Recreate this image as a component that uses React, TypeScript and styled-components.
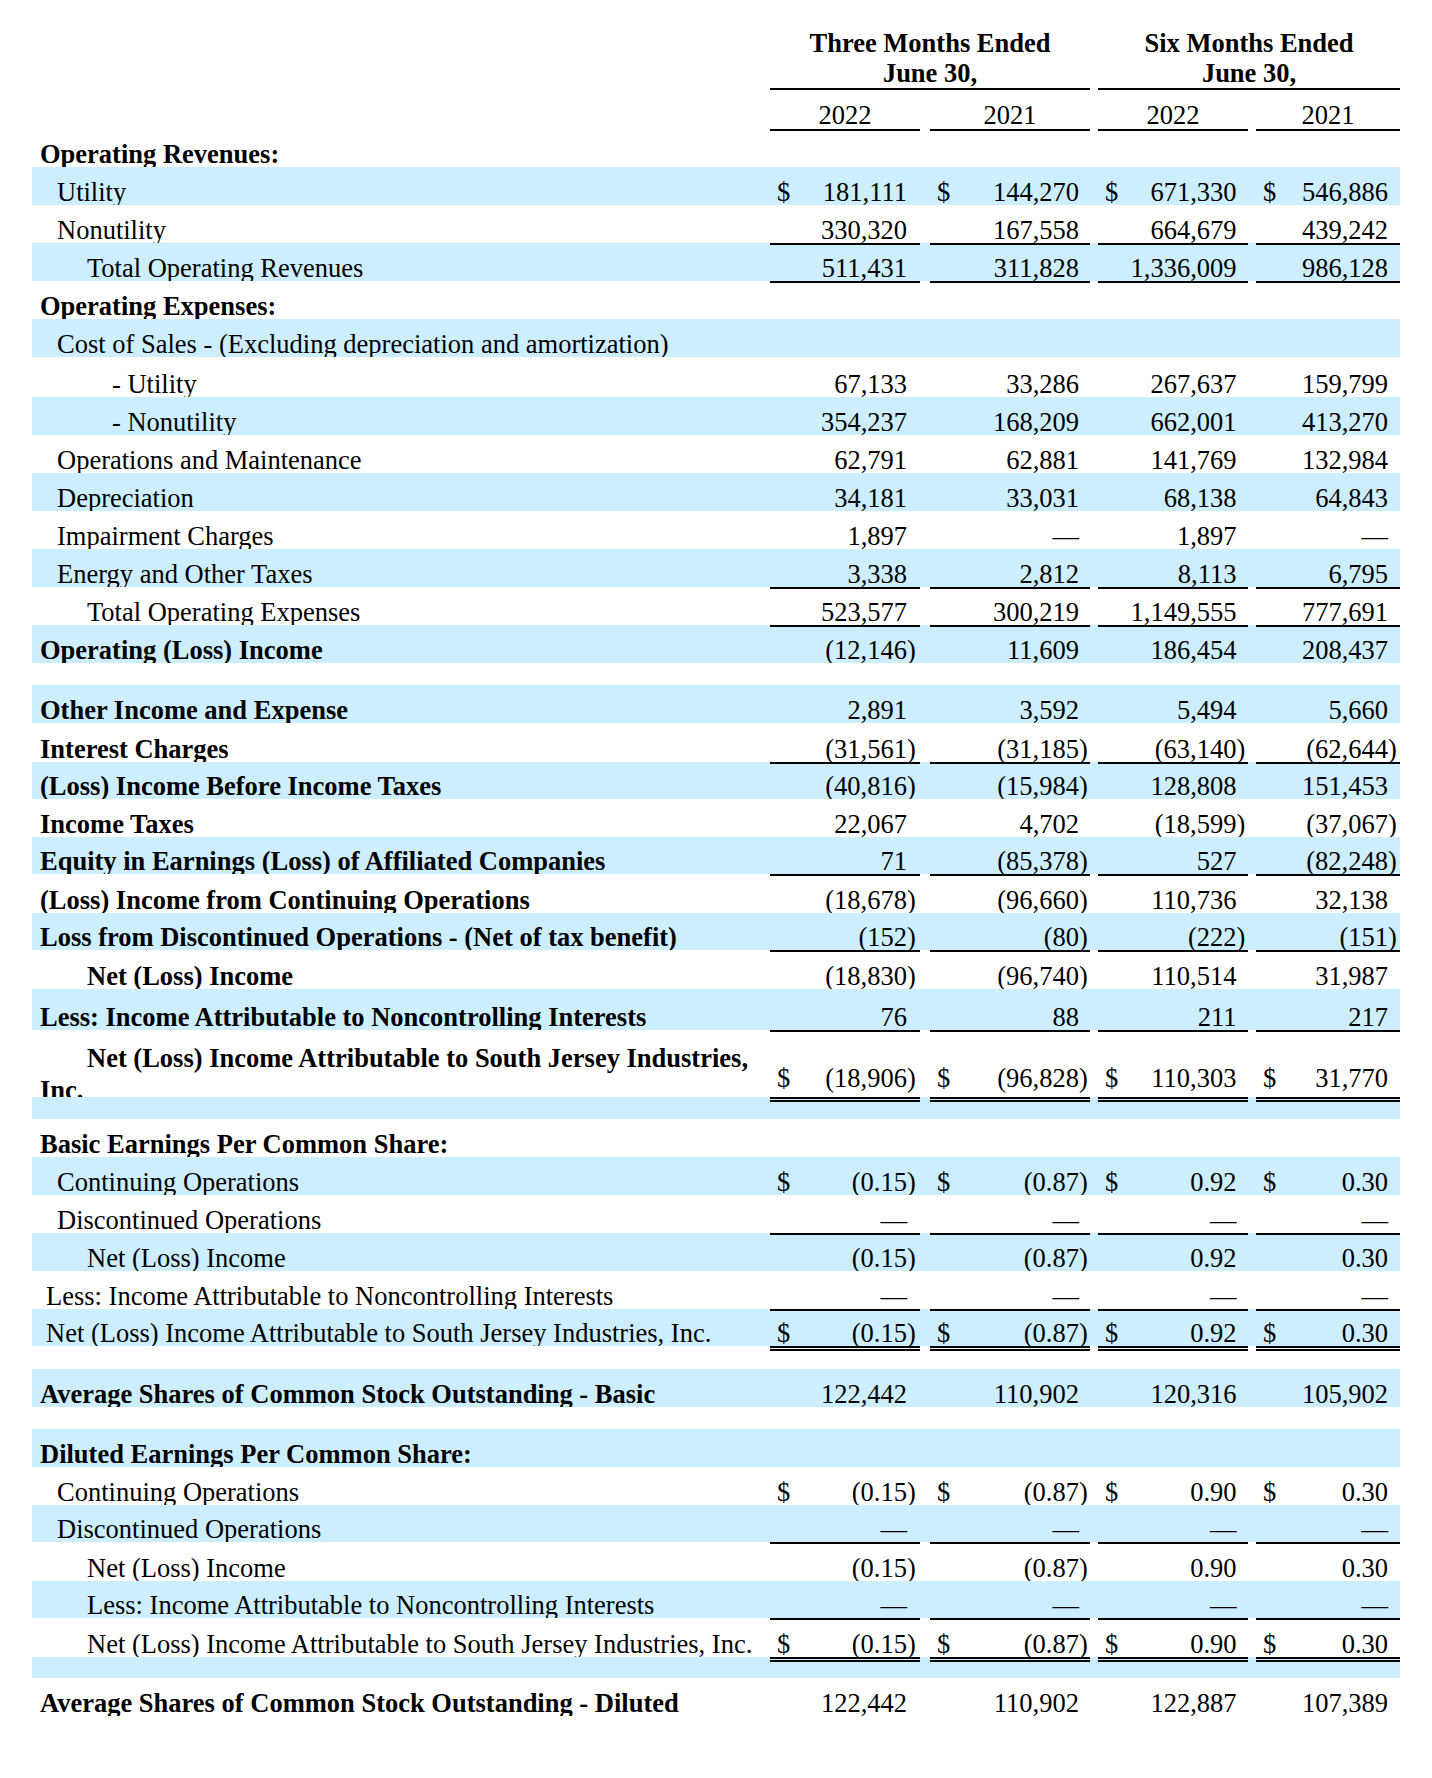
import React from 'react';
import styled, { createGlobalStyle } from 'styled-components';

const GlobalStyle = createGlobalStyle`
  html, body { margin: 0; padding: 0; background: #ffffff; }
  body { font-family: "Liberation Serif", "Times New Roman", serif; color: #000000; }
`;

const COLS = '738px 150px 10px 160px 8px 150px 8px 144px';
const BAND = '#cceeff';
const AMOUNT_COLS = [2, 4, 6, 8];
const PAREN_W = [13, 11, 11.5, 12];

type Rule = 'single' | 'double';

type LineData = {
  label?: string;
  indent?: number;
  bold?: boolean;
  band?: boolean;
  h?: number;
  vals?: string[];
  dollar?: boolean;
  rule?: Rule;
  wrap?: boolean;
  lift?: number;
};

const Statement = styled.div`
  padding: 29px 0 0 32px;
  width: 1368px;
  font-family: "Liberation Serif", "Times New Roman", serif;
  font-size: 26.5px;
  color: #000;
`;

const PeriodHeaderRow = styled.div`
  display: grid;
  grid-template-columns: ${COLS};
`;

const PeriodHeading = styled.div<{ $col: number }>`
  grid-column: ${(p) => p.$col} / span 3;
  text-align: center;
  font-weight: 700;
  line-height: 29.5px;
  border-bottom: 2px solid #000;
`;

const YearRow = styled.div`
  display: grid;
  grid-template-columns: ${COLS};
  height: 41px;
`;

const YearCell = styled.div<{ $col: number }>`
  grid-column: ${(p) => p.$col};
  display: flex;
  align-items: flex-end;
  justify-content: center;
  line-height: 25px;
  padding-bottom: 1px;
  border-bottom: 2px solid #000;
`;

const LineRow = styled.div<{ $h: number; $band: boolean }>`
  display: grid;
  grid-template-columns: ${COLS};
  height: ${(p) => p.$h}px;
  background: ${(p) => (p.$band ? BAND : 'transparent')};
`;

const LineLabel = styled.div<{ $indent: number; $bold: boolean }>`
  grid-column: 1;
  overflow: hidden;
  display: flex;
  align-items: flex-end;
  padding-left: ${(p) => p.$indent}px;
  font-weight: ${(p) => (p.$bold ? 700 : 400)};
`;

const LabelText = styled.span`
  display: block;
  line-height: 25px;
  white-space: nowrap;
`;

const WrappedLabelText = styled.span`
  display: block;
  line-height: 32px;
  text-indent: 47px;
  margin-bottom: -8.8px;
`;

const AmountCell = styled.div<{ $col: number; $rule?: Rule; $lift: number }>`
  grid-column: ${(p) => p.$col};
  display: flex;
  align-items: flex-end;
  overflow: hidden;
  line-height: 25px;
  white-space: nowrap;
  padding-bottom: ${(p) => p.$lift}px;
  border-bottom: ${(p) =>
    p.$rule === 'double' ? '5px double #000' : p.$rule === 'single' ? '2px solid #000' : '0'};
  margin-bottom: ${(p) => (p.$rule === 'double' ? '-5px' : p.$rule === 'single' ? '-2px' : '0')};
`;

const Dollar = styled.span`
  flex: none;
  padding-left: 7px;
`;

const Figure = styled.span`
  flex: 1;
  text-align: right;
`;

const CloseParen = styled.span<{ $w: number }>`
  flex: none;
  width: ${(p) => p.$w}px;
`;

const dash = ['—', '—', '—', '—'];

const LINES: LineData[] = [
  { label: 'Operating Revenues:', bold: true, indent: 8, h: 36 },
  { label: 'Utility', indent: 25, band: true, dollar: true, vals: ['181,111', '144,270', '671,330', '546,886'] },
  { label: 'Nonutility', indent: 25, vals: ['330,320', '167,558', '664,679', '439,242'], rule: 'single' },
  { label: 'Total Operating Revenues', indent: 55, band: true, vals: ['511,431', '311,828', '1,336,009', '986,128'], rule: 'single' },
  { label: 'Operating Expenses:', bold: true, indent: 8 },
  { label: 'Cost of Sales - (Excluding depreciation and amortization)', indent: 25, band: true },
  { label: '- Utility', indent: 80, h: 40, vals: ['67,133', '33,286', '267,637', '159,799'] },
  { label: '- Nonutility', indent: 80, band: true, vals: ['354,237', '168,209', '662,001', '413,270'] },
  { label: 'Operations and Maintenance', indent: 25, vals: ['62,791', '62,881', '141,769', '132,984'] },
  { label: 'Depreciation', indent: 25, band: true, vals: ['34,181', '33,031', '68,138', '64,843'] },
  { label: 'Impairment Charges', indent: 25, vals: ['1,897', '—', '1,897', '—'] },
  { label: 'Energy and Other Taxes', indent: 25, band: true, vals: ['3,338', '2,812', '8,113', '6,795'], rule: 'single' },
  { label: 'Total Operating Expenses', indent: 55, vals: ['523,577', '300,219', '1,149,555', '777,691'], rule: 'single' },
  { label: 'Operating (Loss) Income', bold: true, indent: 8, band: true, vals: ['(12,146)', '11,609', '186,454', '208,437'] },
  { h: 22 },
  { label: 'Other Income and Expense', bold: true, indent: 8, band: true, vals: ['2,891', '3,592', '5,494', '5,660'] },
  { label: 'Interest Charges', bold: true, indent: 8, h: 39, vals: ['(31,561)', '(31,185)', '(63,140)', '(62,644)'], rule: 'single' },
  { label: '(Loss) Income Before Income Taxes', bold: true, indent: 8, band: true, h: 37, vals: ['(40,816)', '(15,984)', '128,808', '151,453'] },
  { label: 'Income Taxes', bold: true, indent: 8, vals: ['22,067', '4,702', '(18,599)', '(37,067)'] },
  { label: 'Equity in Earnings (Loss) of Affiliated Companies', bold: true, indent: 8, band: true, h: 37, vals: ['71', '(85,378)', '527', '(82,248)'], rule: 'single' },
  { label: '(Loss) Income from Continuing Operations', bold: true, indent: 8, h: 39, vals: ['(18,678)', '(96,660)', '110,736', '32,138'] },
  { label: 'Loss from Discontinued Operations - (Net of tax benefit)', bold: true, indent: 8, band: true, h: 37, vals: ['(152)', '(80)', '(222)', '(151)'], rule: 'single' },
  { label: 'Net (Loss) Income', bold: true, indent: 55, h: 39, vals: ['(18,830)', '(96,740)', '110,514', '31,987'] },
  { label: 'Less: Income Attributable to Noncontrolling Interests', bold: true, indent: 8, band: true, h: 41, vals: ['76', '88', '211', '217'], rule: 'single' },
  { label: 'Net (Loss) Income Attributable to South Jersey Industries, Inc.', bold: true, indent: 8, wrap: true, h: 67, dollar: true, lift: 6, vals: ['(18,906)', '(96,828)', '110,303', '31,770'], rule: 'double' },
  { h: 22, band: true },
  { label: 'Basic Earnings Per Common Share:', bold: true, indent: 8 },
  { label: 'Continuing Operations', indent: 25, band: true, dollar: true, vals: ['(0.15)', '(0.87)', '0.92', '0.30'] },
  { label: 'Discontinued Operations', indent: 25, vals: dash, rule: 'single' },
  { label: 'Net (Loss) Income', indent: 55, band: true, vals: ['(0.15)', '(0.87)', '0.92', '0.30'] },
  { label: 'Less: Income Attributable to Noncontrolling Interests', indent: 14, vals: dash, rule: 'single' },
  { label: 'Net (Loss) Income Attributable to South Jersey Industries, Inc.', indent: 14, band: true, h: 37, dollar: true, vals: ['(0.15)', '(0.87)', '0.92', '0.30'], rule: 'double' },
  { h: 23 },
  { label: 'Average Shares of Common Stock Outstanding - Basic', bold: true, indent: 8, band: true, vals: ['122,442', '110,902', '120,316', '105,902'] },
  { h: 22 },
  { label: 'Diluted Earnings Per Common Share:', bold: true, indent: 8, band: true },
  { label: 'Continuing Operations', indent: 25, dollar: true, vals: ['(0.15)', '(0.87)', '0.90', '0.30'] },
  { label: 'Discontinued Operations', indent: 25, band: true, h: 37, vals: dash, rule: 'single' },
  { label: 'Net (Loss) Income', indent: 55, h: 39, vals: ['(0.15)', '(0.87)', '0.90', '0.30'] },
  { label: 'Less: Income Attributable to Noncontrolling Interests', indent: 55, band: true, h: 37, vals: dash, rule: 'single' },
  { label: 'Net (Loss) Income Attributable to South Jersey Industries, Inc.', indent: 55, h: 39, dollar: true, vals: ['(0.15)', '(0.87)', '0.90', '0.30'], rule: 'double' },
  { h: 21, band: true },
  { label: 'Average Shares of Common Stock Outstanding - Diluted', bold: true, indent: 8, vals: ['122,442', '110,902', '122,887', '107,389'] },
];

function Amount({
  value,
  col,
  idx,
  dollar,
  rule,
  lift,
}: {
  value: string;
  col: number;
  idx: number;
  dollar?: boolean;
  rule?: Rule;
  lift: number;
}) {
  const negative = value.startsWith('(') && value.endsWith(')');
  const shown = negative ? value.slice(0, -1) : value;
  return (
    <AmountCell $col={col} $rule={rule} $lift={lift}>
      {dollar ? <Dollar>$</Dollar> : null}
      <Figure>{shown}</Figure>
      <CloseParen $w={PAREN_W[idx]}>{negative ? ')' : ''}</CloseParen>
    </AmountCell>
  );
}

function Line({ line }: { line: LineData }) {
  return (
    <LineRow $h={line.h ?? 38} $band={!!line.band}>
      {line.label ? (
        <LineLabel $indent={line.indent ?? 8} $bold={!!line.bold}>
          {line.wrap ? <WrappedLabelText>{line.label}</WrappedLabelText> : <LabelText>{line.label}</LabelText>}
        </LineLabel>
      ) : null}
      {line.vals
        ? line.vals.map((v, i) => (
            <Amount
              key={i}
              value={v}
              col={AMOUNT_COLS[i]}
              idx={i}
              dollar={line.dollar}
              rule={line.rule}
              lift={line.lift ?? 0}
            />
          ))
        : null}
    </LineRow>
  );
}

export default function App() {
  return (
    <>
      <GlobalStyle />
      <Statement>
        <PeriodHeaderRow>
          <PeriodHeading $col={2}>
            Three Months Ended
            <br />
            June 30,
          </PeriodHeading>
          <PeriodHeading $col={6}>
            Six Months Ended
            <br />
            June 30,
          </PeriodHeading>
        </PeriodHeaderRow>
        <YearRow>
          <YearCell $col={2}>2022</YearCell>
          <YearCell $col={4}>2021</YearCell>
          <YearCell $col={6}>2022</YearCell>
          <YearCell $col={8}>2021</YearCell>
        </YearRow>
        {LINES.map((line, i) => (
          <Line key={i} line={line} />
        ))}
      </Statement>
    </>
  );
}
